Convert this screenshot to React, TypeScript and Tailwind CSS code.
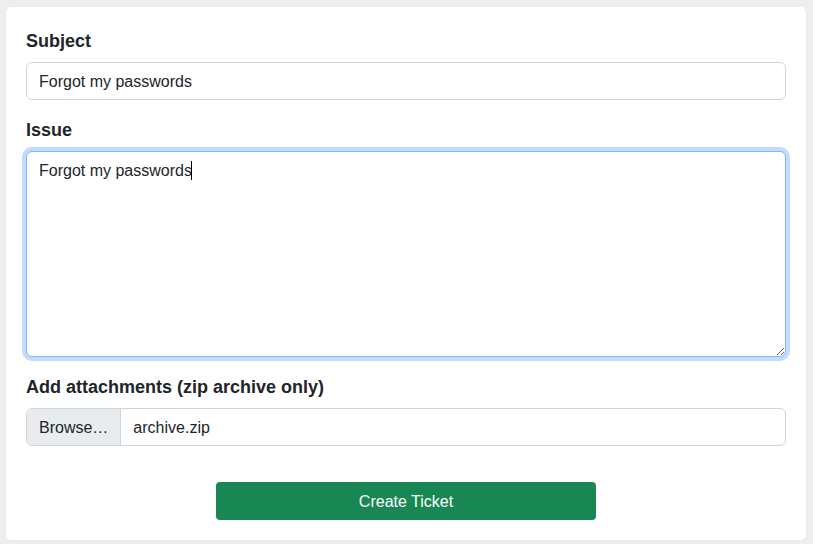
export default function App() {
  return (
    <div
      className="min-h-[544px] bg-[#eeeeee] pt-[7px] pl-[6px] pr-[7px] pb-[4px]"
      style={{ fontFamily: '"Liberation Sans", Arial, sans-serif' }}
    >
      <div className="w-[800px] bg-white rounded-[5px] shadow-[0_0_2px_rgba(0,0,0,0.06)] p-5 text-[#212529]">
        <label className="block text-[18px] font-bold leading-[27px] pt-px mb-[7px]">Subject</label>
        <input
          type="text"
          defaultValue="Forgot my passwords"
          className="block w-full h-[38px] px-3 pt-[2px] text-[16px] border border-[#ced4da] rounded-[6px] bg-white outline-none"
        />

        <label className="block text-[18px] font-bold leading-[27px] pt-px mt-4 mb-[7px]">Issue</label>
        <div className="relative">
          <textarea
            defaultValue="Forgot my passwords"
            className="block w-full h-[206px] px-3 pt-[7px] pb-[5px] text-[16px] leading-[24px] border border-[#86b7fe] rounded-[6px] bg-white outline-none shadow-[0_0_0_4px_rgba(13,110,253,0.25)] resize-y"
          />
          <div className="absolute left-[165px] top-[10px] w-px h-[19px] bg-black" />
        </div>

        <label className="block text-[18px] font-bold leading-[27px] pt-px mt-4 mb-[7px]">
          Add attachments (zip archive only)
        </label>
        <div className="flex h-[38px] w-full border border-[#ced4da] rounded-[6px] overflow-hidden text-[16px]">
          <div className="flex items-center px-3 pt-[2px] bg-[#e9ecef] border-r border-[#ced4da]">Browse…</div>
          <div className="flex items-center px-3 pt-[2px]">archive.zip</div>
        </div>

        <div className="flex justify-center mt-9">
          <button className="w-[380px] h-[38px] pt-[2px] bg-[#198754] text-white text-[16px] rounded-[4px]">
            Create Ticket
          </button>
        </div>
      </div>
    </div>
  );
}
